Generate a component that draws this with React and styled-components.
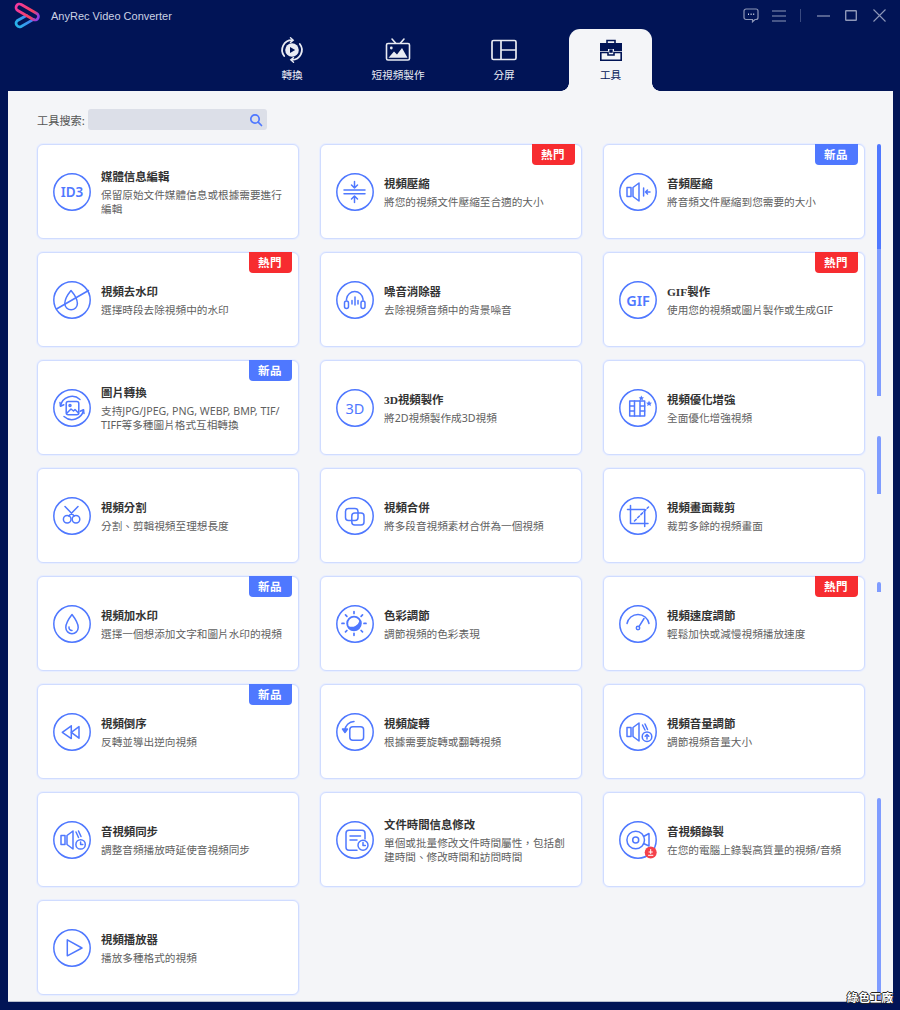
import React from 'react';
import styled, { createGlobalStyle } from 'styled-components';

const NAVY = '#011456';
const BLUE = '#4f78ff';
const PANEL = '#f4f5f8';
const CJK = '"Noto Sans CJK TC", "Noto Sans", sans-serif';

const GlobalStyle = createGlobalStyle`
	html, body {
		margin: 0;
		padding: 0;
		background: ${NAVY};
	}
	* {
		box-sizing: border-box;
	}
`

const Window = styled.div`
	width: 900px;
	height: 1010px;
	overflow: hidden;
	background: ${NAVY};
	font-family: ${CJK};
`

const TopBar = styled.header`
	height: 29px;
	display: flex;
	align-items: center;
	padding: 2px 14px 0 14px;
`

const AppName = styled.span`
	margin-left: 11px;
	font-family: "Liberation Sans", sans-serif;
	font-size: 11px;
	color: #ccd2e4;
	flex: 1;
`

const WindowButton = styled.button`
	border: none;
	padding: 0;
	background: none;
	width: ${(p) => p.$w}px;
	height: 16px;
	margin-left: ${(p) => p.$gap}px;
	display: flex;
	align-items: center;
	justify-content: center;
	svg {
		display: block;
	}
`

const Separator = styled.span`
	width: 1px;
	height: 13px;
	margin-left: 14px;
	background: #3a4a80;
`

const TabRow = styled.nav`
	height: 62px;
	display: flex;
	justify-content: center;
	gap: 24px;
	padding-left: 2px;
`

const Tab = styled.div`
	position: relative;
	width: ${(p) => (p.$active ? 83 : 82)}px;
	margin-right: ${(p) => (p.$active ? -1 : 0)}px;
	display: flex;
	flex-direction: column;
	align-items: center;
	padding-top: 8px;
	border-radius: 11px 11px 0 0;
	background: ${(p) => (p.$active ? PANEL : 'transparent')};
	color: ${(p) => (p.$active ? NAVY : '#e9ebf3')};

	${(p) => p.$active && `
		&::before, &::after {
			content: "";
			position: absolute;
			bottom: 0;
			width: 8px;
			height: 8px;
		}
		&::before {
			left: -8px;
			background: radial-gradient(circle at 0 0, transparent 7.5px, ${PANEL} 8px);
		}
		&::after {
			right: -8px;
			background: radial-gradient(circle at 100% 0, transparent 7.5px, ${PANEL} 8px);
		}
	`}
`

const TabIcon = styled.svg`
	width: 26px;
	height: 26px;
	display: block;
`

const TabLabel = styled.span`
	margin-top: 5px;
	font-size: 10.6px;
	line-height: 14px;
	font-weight: 400;
`

const Panel = styled.main`
	position: relative;
	height: 911px;
	margin: 0 7px 8px 8px;
	padding: 18px 0 0 29px;
	background: ${PANEL};
	border-bottom: 1px solid #b9bfcf;
`

const SearchRow = styled.div`
	display: flex;
	align-items: center;
	height: 21px;
	margin-bottom: 14px;
`

const SearchLabel = styled.label`
	width: 51px;
	font-size: 11.2px;
	color: #555;
`

const SearchBox = styled.div`
	width: 179px;
	height: 21px;
	border-radius: 3px;
	background: #dcdfe8;
	display: flex;
	align-items: center;
	justify-content: flex-end;
	padding-right: 4px;
`

const Body = styled.div`
	display: flex;
	height: 857px;
`

const ToolGrid = styled.div`
	display: grid;
	grid-template-columns: repeat(3, 262px);
	grid-auto-rows: 95px;
	gap: 13px 21px;
	align-self: flex-start;
`

const Card = styled.article`
	position: relative;
	display: flex;
	align-items: center;
	padding-left: 15px;
	background: #fff;
	border: 1px solid #d0dcff;
	border-radius: 6px;
	box-shadow: 0 0 0 1px #e8eeff;
`

const Badge = styled.span`
	position: absolute;
	top: -1px;
	right: 6px;
	width: 43px;
	height: 21px;
	padding-right: 1px;
	border-radius: 0 0 4px 4px;
	background: ${(p) => (p.$kind === 'hot' ? '#f72c30' : BLUE)};
	color: #fff;
	font-size: 11.5px;
	font-weight: 700;
	line-height: 21px;
	letter-spacing: 0.4px;
	text-align: center;
`

const IconBox = styled.svg`
	flex: none;
	width: 38px;
	height: 38px;
	margin-right: 10px;
	fill: none;
	stroke: ${BLUE};
	stroke-width: 1.5;
	stroke-linecap: round;
	stroke-linejoin: round;

	text {
		fill: ${BLUE};
		stroke: none;
		font-family: "Noto Sans", sans-serif;
		font-weight: 600;
		text-anchor: middle;
	}
`

const TextBlock = styled.div`
	min-width: 0;
`

const Title = styled.h3`
	margin: 0 0 3px;
	padding-top: 1px;
	font-family: "Liberation Serif", ${CJK};
	font-size: 11.4px;
	line-height: 16px;
	font-weight: 700;
	color: #333;
`

const Desc = styled.p`
	margin: 0;
	font-size: 10.65px;
	line-height: 14px;
	color: #5f5f5f;
	white-space: pre-line;
	font-family: "Noto Sans", ${CJK};
`

const ScrollRail = styled.div`
	width: 4px;
	margin-left: 12px;
	display: flex;
	flex-direction: column;
`

const ScrollPiece = styled.span`
	display: block;
	width: 4px;
	height: ${(p) => p.$h}px;
	margin-top: ${(p) => p.$gap}px;
	flex: none;
	background: ${(p) => p.$color};
	border-radius: ${(p) => (p.$flat ? '0' : '2px 2px 0 0')};
`

const Watermark = styled.span`
	position: absolute;
	right: 0;
	bottom: -2px;
	font-size: 11.5px;
	font-weight: 700;
	line-height: 12px;
	color: #fff;
	text-shadow: 1px 0 0 #222, -1px 0 0 #222, 0 1px 0 #222, 0 -1px 0 #222;
`

const Ring = () => <circle cx="19" cy="19" r="18.2" />

const speaker = (
	<>
		<rect x="8" y="14.5" width="4" height="9" />
		<path d="M14 14.5 L20 10 V28 L14 23.5 Z" />
	</>
);

const icons = {
	id3: <><Ring /><text x="19" y="24" fontSize="13.5">ID3</text></>,
	compress: (
		<>
			<Ring />
			<path d="M8 17 H29 M8 20.8 H29" />
			<path d="M18.5 8.5 V15 M15.5 12 L18.5 15 L21.5 12" />
			<path d="M18.5 23 V29.5 M15.5 26 L18.5 23 L21.5 26" />
		</>
	),
	audioCompress: (
		<>
			<Ring />
			{speaker}
			<path d="M24.6 15 V23 M31 19 H26.5 M28.5 17 L26.5 19 L28.5 21" />
		</>
	),
	removeMark: (
		<>
			<Ring />
			<path d="M18 9.5 C18 9.5 11.8 17 11.8 22.5 A6.3 6.3 0 0 0 24.4 22.5 C24.4 17 18 9.5 18 9.5 Z" />
			<path d="M3.5 28 L35.5 9.5" />
		</>
	),
	denoise: (
		<>
			<Ring />
			<path d="M10.5 19 V18 A8.3 8.3 0 0 1 27 18 V19" />
			<rect x="8.5" y="20" width="4" height="7.5" rx="2" />
			<rect x="25" y="20" width="4" height="7.5" rx="2" />
			<path d="M16 19.5 V23 M19 16 V24 M22 19.5 V23" />
		</>
	),
	gif: <><Ring /><text x="19" y="24.5" fontSize="14.5">GIF</text></>,
	imageConvert: (
		<>
			<Ring />
			<rect x="13.2" y="12.5" width="12.6" height="13.2" rx="2" />
			<circle cx="17" cy="16.5" r="1" />
			<path d="M14 24 L18 20 L20.5 22 L22 20.5 L25.5 24" />
			<path d="M7.5 17 A11.8 11.8 0 0 1 27 10.5 M30.5 21 A11.8 11.8 0 0 1 11 27.5" />
			<path d="M7 13.5 L7.5 17.2 L10.8 15.8 M31 24.5 L30.5 20.8 L27.2 22.2" />
		</>
	),
	threeD: <><Ring /><text x="19" y="24.5" fontSize="14.5" style={{ fontWeight: 400 }}>3D</text></>,
	enhance: (
		<>
			<Ring />
			<rect x="10.7" y="12" width="15" height="15" />
			<path d="M15.5 12 V27 M21 12 V27 M10.7 17 H15.5 M10.7 22 H15.5 M21 17 H25.7 M21 22 H25.7" />
			<path d="M22.3 6.5 L23.2 8.3 L25 8.6 L23.6 9.8 L24 11.5 L22.3 10.6 L20.7 11.5 L21 9.8 L19.7 8.6 L21.5 8.3 Z" fill={BLUE} stroke="none" />
			<path d="M30 11.5 L30.9 13.4 L33 13.7 L31.5 15 L31.9 17 L30 16 L28.2 17 L28.6 15 L27 13.7 L29.2 13.4 Z" fill={BLUE} stroke="none" />
		</>
	),
	split: (
		<>
			<Ring />
			<circle cx="14.2" cy="22.3" r="3.8" />
			<circle cx="23" cy="22.3" r="3.8" />
			<path d="M12 9.5 L21.2 19 M25 9.5 L15.8 19" />
		</>
	),
	merge: (
		<>
			<Ring />
			<rect x="9.5" y="11.5" width="12.5" height="12" rx="3" />
			<rect x="15.8" y="16" width="12.2" height="12" rx="3" />
		</>
	),
	crop: (
		<>
			<Ring />
			<path d="M11.5 8.5 V26.5 H29 M8.5 12.5 H25.7 V29.5" />
			<path d="M15.5 24 L29.5 10" strokeDasharray="2.5 2" />
		</>
	),
	addMark: (
		<>
			<Ring />
			<path d="M19 9.5 C19 9.5 12.8 17.5 12.8 22.5 A6.2 6.2 0 0 0 25.2 22.5 C25.2 17.5 19 9.5 19 9.5 Z" />
			<path d="M16 22 A3 3 0 0 0 19 25.5" />
		</>
	),
	color: (
		<>
			<Ring />
			<circle cx="18" cy="18.4" r="6.8" strokeWidth="1.9" />
			<path d="M12.5 22 A6.8 6.8 0 0 0 24.3 16 A9 9 0 0 1 12.5 22 Z" fill={BLUE} />
			<path d="M18 6.5 V8.5 M18 28.3 V30.3 M6 18.4 H8 M28 18.4 H30 M9.5 9.9 L10.9 11.3 M25.1 25.5 L26.5 26.9 M26.5 9.9 L25.1 11.3 M10.9 25.5 L9.5 26.9" strokeWidth="1.7" />
		</>
	),
	speed: (
		<>
			<Ring />
			<path d="M8 18.5 A11.2 11.2 0 0 1 30 18.5" />
			<circle cx="19" cy="23" r="1.7" />
			<path d="M20 21.6 L25 13.5" />
		</>
	),
	rewind: (
		<>
			<Ring />
			<path d="M9.3 19.3 L18.3 12.8 V25.6 Z" />
			<path d="M18.3 19.3 L26 13.6 V25.2 Z" />
		</>
	),
	rotate: (
		<>
			<Ring />
			<rect x="13.8" y="13.8" width="13.8" height="13.4" rx="3" />
			<path d="M8.8 17.5 A9.5 9.5 0 0 1 18 8.5" />
			<path d="M6.5 16 L9 19.5 L11.5 16 Z" fill={BLUE} />
		</>
	),
	volume: (
		<>
			<Ring />
			{speaker}
			<path d="M23.5 12 L26 17 M26 11 L28.5 16.5" />
			<circle cx="28" cy="23.7" r="4.8" />
			<path d="M28 26 V21.5 M26.2 23.2 L28 21.5 L29.8 23.2" />
		</>
	),
	sync: (
		<>
			<Ring />
			{speaker}
			<path d="M23 11 L25.5 16.5 M25.5 10 L28 15.5" />
			<circle cx="27.6" cy="23.4" r="4.7" />
			<path d="M27.6 21 V23.6 H29.8" />
		</>
	),
	fileTime: (
		<>
			<Ring />
			<path d="M21 29.3 H13 A3 3 0 0 1 10 26.3 V12.3 A3 3 0 0 1 13 9.3 H26 A3 3 0 0 1 29 12.3 V18" />
			<path d="M14 15 H24.5 M14 19 H21" />
			<circle cx="27" cy="24.3" r="5" />
			<path d="M27 21.5 V24.5 H29.3" />
		</>
	),
	record: (
		<>
			<Ring />
			<circle cx="16.7" cy="19" r="8.8" />
			<circle cx="16.7" cy="19" r="3" />
			<path d="M24.5 15.5 L30 12.5 V25 L24.5 22.5" />
			<circle cx="31.7" cy="31.5" r="6" fill="#f4414a" stroke="none" />
			<path d="M31.7 28.5 V32.5 M30 31 H33.4 M29.5 34.3 H33.9" stroke="#fff" strokeWidth="1" />
		</>
	),
	player: (
		<>
			<Ring />
			<path d="M14.3 10.8 V26.8 L29 19 Z" />
		</>
	),
};

const tools = [
	{ icon: 'id3', title: '媒體信息編輯', desc: '保留原始文件媒體信息或根據需要進行\n編輯' },
	{ icon: 'compress', title: '視頻壓縮', desc: '將您的視頻文件壓縮至合適的大小', badge: 'hot' },
	{ icon: 'audioCompress', title: '音頻壓縮', desc: '將音頻文件壓縮到您需要的大小', badge: 'new' },
	{ icon: 'removeMark', title: '視頻去水印', desc: '選擇時段去除視頻中的水印', badge: 'hot' },
	{ icon: 'denoise', title: '噪音消除器', desc: '去除視頻音頻中的背景噪音' },
	{ icon: 'gif', title: 'GIF製作', desc: '使用您的視頻或圖片製作或生成GIF', badge: 'hot' },
	{ icon: 'imageConvert', title: '圖片轉換', desc: '支持JPG/JPEG, PNG, WEBP, BMP, TIF/\nTIFF等多種圖片格式互相轉換', badge: 'new' },
	{ icon: 'threeD', title: '3D視頻製作', desc: '將2D視頻製作成3D視頻' },
	{ icon: 'enhance', title: '視頻優化增強', desc: '全面優化增強視頻' },
	{ icon: 'split', title: '視頻分割', desc: '分割、剪輯視頻至理想長度' },
	{ icon: 'merge', title: '視頻合併', desc: '將多段音視頻素材合併為一個視頻' },
	{ icon: 'crop', title: '視頻畫面裁剪', desc: '裁剪多餘的視頻畫面' },
	{ icon: 'addMark', title: '視頻加水印', desc: '選擇一個想添加文字和圖片水印的視頻', badge: 'new' },
	{ icon: 'color', title: '色彩調節', desc: '調節視頻的色彩表現' },
	{ icon: 'speed', title: '視頻速度調節', desc: '輕鬆加快或減慢視頻播放速度', badge: 'hot' },
	{ icon: 'rewind', title: '視頻倒序', desc: '反轉並導出逆向視頻', badge: 'new' },
	{ icon: 'rotate', title: '視頻旋轉', desc: '根據需要旋轉或翻轉視頻' },
	{ icon: 'volume', title: '視頻音量調節', desc: '調節視頻音量大小' },
	{ icon: 'sync', title: '音視頻同步', desc: '調整音頻播放時延使音視頻同步' },
	{ icon: 'fileTime', title: '文件時間信息修改', desc: '單個或批量修改文件時間屬性\uFF0C包括創\n建時間、修改時間和訪問時間' },
	{ icon: 'record', title: '音視頻錄製', desc: '在您的電腦上錄製高質量的視頻/音頻' },
	{ icon: 'player', title: '視頻播放器', desc: '播放多種格式的視頻' },
];

const scrollPieces = [
	{ h: 105, gap: 0, color: BLUE },
	{ h: 147, gap: 0, color: '#7f9cff', flat: true },
	{ h: 58, gap: 40, color: '#7f9cff' },
	{ h: 10, gap: 88, color: '#7f9cff' },
	{ h: 204, gap: 206, color: '#7f9cff' },
];

const Logo = () => (
	<svg width="26" height="28" viewBox="0 0 26 28" fill="none" strokeWidth="2.7" strokeLinecap="round">
		<defs>
			<linearGradient id="logoTop" gradientUnits="userSpaceOnUse" x1="3" y1="3" x2="25" y2="14">
				<stop offset="0" stopColor="#f2389f" />
				<stop offset="0.7" stopColor="#f5425f" />
				<stop offset="1" stopColor="#8d3fe6" />
			</linearGradient>
			<linearGradient id="logoBottom" gradientUnits="userSpaceOnUse" x1="3" y1="25" x2="20" y2="14">
				<stop offset="0" stopColor="#27b6ea" />
				<stop offset="1" stopColor="#4a74f4" />
			</linearGradient>
		</defs>
		<path d="M12.5 13.5 L3.2 18.7 A3.6 3.6 0 0 0 6.8 24.7 L19.5 17.3" stroke="url(#logoBottom)" />
		<path d="M7.25 2.47 L22.75 11.47 A3.5 3.5 0 0 1 19.25 17.53 L3.75 8.53 A3.5 3.5 0 0 1 7.25 2.47 Z" stroke="url(#logoTop)" />
	</svg>
);

const tabs = [
	{
		label: '轉換',
		icon: (
			<g fill="none" stroke="currentColor" strokeWidth="1.8" strokeLinecap="round">
				<path d="M5.2 19 A9.8 9.8 0 0 1 13 3.2 M20.8 7 A9.8 9.8 0 0 1 13 22.8" />
				<path d="M11.5 0.8 L14.2 3.2 L11.5 5.4 M14.5 20.6 L11.8 22.8 L14.5 25.2" strokeWidth="1.4" />
				<circle cx="13" cy="13" r="6.8" fill="currentColor" stroke="none" />
				<path d="M11 10 L16.2 13 L11 16 Z" fill={NAVY} stroke="none" />
			</g>
		),
	},
	{
		label: '短視頻製作',
		icon: (
			<g fill="none" stroke="currentColor" strokeWidth="1.6" strokeLinecap="round">
				<rect x="1.5" y="6.5" width="23" height="16.5" rx="1.5" />
				<path d="M7 2 L10.5 6 M19 2 L15.5 6" />
				<path d="M3.5 20.8 L9 14.5 L12 17.5 L17 11 L22.5 20.8 Z" fill="currentColor" stroke="none" />
				<circle cx="6.3" cy="11" r="1.4" fill="currentColor" stroke="none" />
			</g>
		),
	},
	{
		label: '分屏',
		icon: (
			<g fill="none" stroke="currentColor" strokeWidth="1.7">
				<rect x="1" y="3.5" width="24" height="19" rx="1.5" />
				<path d="M10 3.5 V22.5 M10 13 H25" />
			</g>
		),
	},
	{
		label: '工具',
		active: true,
		icon: (
			<g>
				<path d="M9 6 V3.5 H17 V6" fill="none" stroke="currentColor" strokeWidth="1.6" />
				<path d="M2 6 H24 V14 H16 V12 H10 V14 H2 Z" fill="currentColor" />
				<rect x="11.3" y="12.4" width="3.4" height="3.4" fill="currentColor" />
				<path d="M2.8 15.5 H10 V18 H16 V15.5 H23.2 V23.2 H2.8 Z" fill="none" stroke="currentColor" strokeWidth="1.6" />
			</g>
		),
	},
];

const App = () => {
	const grey = '#8e97b8';
	return (
		<Window>
			<GlobalStyle />
			<TopBar>
				<Logo />
				<AppName>AnyRec Video Converter</AppName>
				<WindowButton $w={16} $gap={0}>
					<svg width="16" height="15" viewBox="0 0 16 15" fill="none" stroke={grey} strokeWidth="1.2">
						<path d="M3 1 H13 A2 2 0 0 1 15 3 V9.5 A2 2 0 0 1 13 11.5 H12 L9.5 13.8 L9.5 11.5 H3 A2 2 0 0 1 1 9.5 V3 A2 2 0 0 1 3 1 Z" />
						<path d="M5 6.3 H6 M7.6 6.3 H8.6 M10.2 6.3 H11.2" stroke="#d8dcea" strokeWidth="1.4" />
					</svg>
				</WindowButton>
				<WindowButton $w={14} $gap={13}>
					<svg width="14" height="12" viewBox="0 0 14 12" stroke={grey} strokeWidth="1.1">
						<path d="M0 1 H14 M0 6 H14 M0 11 H14" />
					</svg>
				</WindowButton>
				<Separator />
				<WindowButton $w={13} $gap={16}>
					<svg width="13" height="2" viewBox="0 0 13 2" stroke={grey} strokeWidth="1.2">
						<path d="M0 1 H13" />
					</svg>
				</WindowButton>
				<WindowButton $w={12} $gap={15}>
					<svg width="12" height="11" viewBox="0 0 12 11" fill="none" stroke={grey} strokeWidth="1.4">
						<rect x="0.7" y="0.7" width="10.6" height="9.6" rx="0.5" />
					</svg>
				</WindowButton>
				<WindowButton $w={13} $gap={16}>
					<svg width="13" height="13" viewBox="0 0 13 13" stroke={grey} strokeWidth="1.1">
						<path d="M0.5 0.5 L12.5 12.5 M12.5 0.5 L0.5 12.5" />
					</svg>
				</WindowButton>
			</TopBar>
			<TabRow>
				{tabs.map((tab) => (
					<Tab key={tab.label} $active={tab.active}>
						<TabIcon viewBox="0 0 26 26">{tab.icon}</TabIcon>
						<TabLabel>{tab.label}</TabLabel>
					</Tab>
				))}
			</TabRow>
			<Panel>
				<SearchRow>
					<SearchLabel>工具搜索:</SearchLabel>
					<SearchBox>
						<svg width="14" height="14" viewBox="0 0 14 14" fill="none" stroke={BLUE} strokeWidth="1.7" strokeLinecap="round">
							<circle cx="6" cy="6" r="4.2" />
							<path d="M9.2 9.2 L12.5 12.5" />
						</svg>
					</SearchBox>
				</SearchRow>
				<Body>
					<ToolGrid>
						{tools.map((tool) => (
							<Card key={tool.title}>
								{tool.badge && <Badge $kind={tool.badge}>{tool.badge === 'hot' ? '熱門' : '新品'}</Badge>}
								<IconBox viewBox="0 0 38 38">{icons[tool.icon]}</IconBox>
								<TextBlock>
									<Title>{tool.title}</Title>
									<Desc>{tool.desc}</Desc>
								</TextBlock>
							</Card>
						))}
					</ToolGrid>
					<ScrollRail>
						{scrollPieces.map((piece, i) => (
							<ScrollPiece key={i} $h={piece.h} $gap={piece.gap} $color={piece.color} $flat={piece.flat} />
						))}
					</ScrollRail>
				</Body>
				<Watermark>綠色工廠</Watermark>
			</Panel>
		</Window>
	);
}

export default App;
